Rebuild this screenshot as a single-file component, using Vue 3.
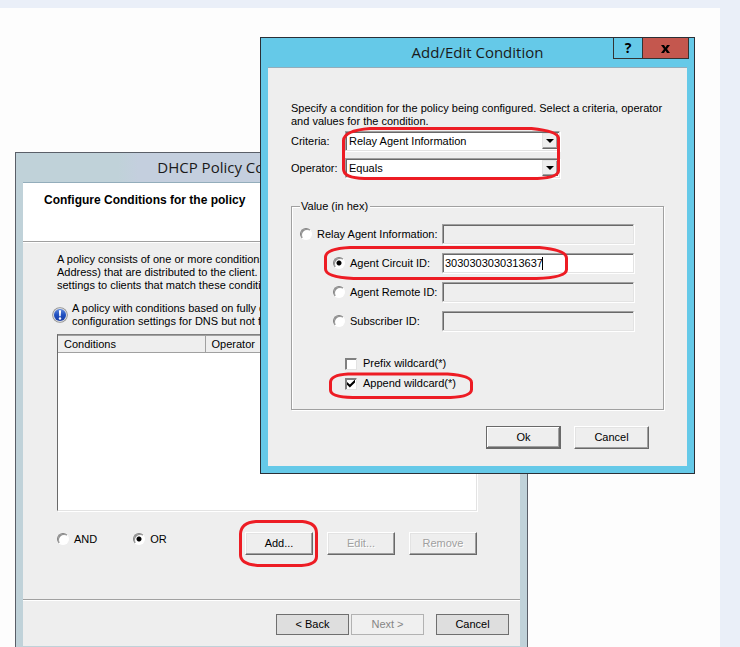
<script setup>
import { ref } from 'vue'

const match = ref('OR')
const criteria = ref('Relay Agent Information')
const operator = ref('Equals')
const field = ref('circuit')
const prefix = ref(false)
const append = ref(true)

const fields = ref([
  { id: 'relay', label: 'Relay Agent Information:', value: '', sub: false },
  { id: 'circuit', label: 'Agent Circuit ID:', value: '3030303030313637', sub: true },
  { id: 'remote', label: 'Agent Remote ID:', value: '', sub: true },
  { id: 'subscriber', label: 'Subscriber ID:', value: '', sub: true },
])
</script>

<template>
  <main class="desktop">
    <div class="sheet"></div>

    <section class="window wizard" aria-label="DHCP Policy Configuration Wizard">
      <h1 class="title">DHCP Policy Configuration Wizard</h1>
      <div class="client">
        <header class="banner"><h2>Configure Conditions for the policy</h2></header>
        <div class="page">
          <p class="intro">
            A policy consists of one or more conditions and a set<br />
            Address) that are distributed to the client. The policy<br />
            settings to clients that match these conditions.
          </p>
          <div class="note">
            <svg class="info" viewBox="0 0 16 16" aria-hidden="true">
              <defs>
                <linearGradient id="ball" x1="0" y1="0" x2="0" y2="1">
                  <stop offset="0" stop-color="#5b86dc" />
                  <stop offset="0.5" stop-color="#1f4fc0" />
                  <stop offset="1" stop-color="#1b3fa4" />
                </linearGradient>
              </defs>
              <circle cx="8" cy="8" r="7.8" fill="#8d8d8d" />
              <circle cx="8" cy="8" r="7" fill="#d9dbe0" />
              <circle cx="8" cy="8" r="6" fill="url(#ball)" />
              <path d="M6.9 3.2h2.2l-.4 6H7.3z" fill="#fff" />
              <circle cx="8" cy="11.5" r="1.2" fill="#fff" />
            </svg>
            <p>
              A policy with conditions based on fully qualified<br />
              configuration settings for DNS but not for
            </p>
          </div>
          <div class="list">
            <table>
              <thead>
                <tr><th class="first">Conditions</th><th>Operator</th></tr>
              </thead>
            </table>
          </div>
          <div class="actions">
            <div class="modes">
              <label class="choice"><input v-model="match" type="radio" name="match" value="AND" />AND</label>
              <label class="choice"><input v-model="match" type="radio" name="match" value="OR" />OR</label>
            </div>
            <div class="edit">
              <button type="button" class="raised">Add...</button>
              <button type="button" class="raised" disabled>Edit...</button>
              <button type="button" class="raised" disabled>Remove</button>
            </div>
          </div>
        </div>
        <footer class="nav">
          <button type="button" class="flat">&lt; Back</button>
          <button type="button" class="flat" disabled>Next &gt;</button>
          <button type="button" class="flat last">Cancel</button>
        </footer>
      </div>
    </section>

    <section class="window dialog" role="dialog" aria-label="Add/Edit Condition">
      <h1 class="title">Add/Edit Condition</h1>
      <div class="caption">
        <button type="button" aria-label="Help">?</button>
        <button type="button" class="close" aria-label="Close">
          <svg viewBox="0 0 9 8" aria-hidden="true">
            <path d="M0 0h3l1.500 2.400L6 0h3L6 4l3 4H6L4.500 5.600 3 8H0l3-4z" fill="#000" />
          </svg>
        </button>
      </div>
      <form class="client form" @submit.prevent>
        <p>
          Specify a condition for the policy being configured. Select a criteria, operator<br />
          and values for the condition.
        </p>
        <div class="picks">
          <label for="criteria">Criteria:</label>
          <div class="combo sunken">
            <select id="criteria" v-model="criteria">
              <option>Relay Agent Information</option>
            </select>
            <span class="arrow"></span>
          </div>
          <label for="operator">Operator:</label>
          <div class="combo sunken">
            <select id="operator" v-model="operator">
              <option>Equals</option>
            </select>
            <span class="arrow"></span>
          </div>
        </div>
        <fieldset>
          <legend>Value (in hex)</legend>
          <div v-for="f in fields" :key="f.id" class="row">
            <label class="choice" :class="{ sub: f.sub }">
              <input v-model="field" type="radio" name="field" :value="f.id" />{{ f.label }}
            </label>
            <div class="box sunken" :class="{ off: field !== f.id }">
              <input v-model="f.value" type="text" :aria-label="f.label" :disabled="field !== f.id" />
              <span v-if="field === f.id" class="caret"></span>
            </div>
          </div>
          <div class="wild">
            <label class="choice"><input v-model="prefix" type="checkbox" />Prefix wildcard(*)</label>
            <label class="choice"><input v-model="append" type="checkbox" />Append wildcard(*)</label>
          </div>
        </fieldset>
        <div class="buttons">
          <button type="submit" class="raised default">Ok</button>
          <button type="button" class="raised">Cancel</button>
        </div>
      </form>
    </section>

    <svg class="marks" width="740" height="647" viewBox="0 0 740 647" aria-hidden="true">
      <g fill="none" stroke="#ed1c24" stroke-width="3">
        <path d="M343.5 141v28q0 9 21 9.500h173q21-1 21-8V138q-1-7-27-9.500H370q-26 2-26.500 12z" />
        <path d="M325.500 257v12q0 8 28 9.500h183q30-1 30-9V258q0-8-27-10.500H350q-24 1-24.500 9.500z" />
        <path d="M330.500 382v8q0 7 22 7.500h98q21-1 21-8v-7q0-7-24-8.500H348q-17 1-17.500 8z" />
        <path d="M240.500 534v21q0 9 17 10.500h44q15-1 15-9V533q0-10-14-11.500H256q-15 1-15.500 12.500z" />
      </g>
    </svg>
  </main>
</template>

<style>
body {
  margin: 0;
  background: #eaeff8;
}
</style>

<style scoped>
* {
  box-sizing: border-box;
}
.desktop {
  position: relative;
  min-height: 100vh;
  padding: 8px 20px 0 0;
  display: flex;
  overflow: hidden;
  font: 11px/13px "Liberation Sans", Arial, sans-serif;
  color: #000;
}
.sheet {
  flex: 1;
  background: #fdfdfd;
}
p, h1, h2 {
  margin: 0;
}
p {
  white-space: nowrap;
}
.window {
  position: absolute;
  padding: 0 7px 7px;
  border: 1px solid #2b2f36;
}
.wizard {
  left: 15px;
  top: 152px;
  width: 513px;
  background: #c0d2d9;
  border-color: #5a5f68;
}
.dialog {
  left: 260px;
  top: 37px;
  width: 435px;
  background: #65c9e8;
}
.title {
  height: 29px;
  font: 15px/29px "Open Sans", "Noto Sans", sans-serif;
  text-align: center;
  color: #1a1a1a;
  white-space: nowrap;
}
.wizard .title {
  margin: 0 -7px;
  padding-left: 8px;
  background: linear-gradient(90deg, #c0d2d9 20%, #c4cfde 24%, #c4cfde);
}
.client {
  background: #eee;
  border-top: 1px solid #93adbb;
  overflow: hidden;
}

/* wizard */
.banner {
  height: 59px;
  padding: 11px 21px;
  background: #fff;
  border-bottom: 1px solid #a0a0a0;
}
.banner h2 {
  font-size: 12px;
  line-height: 13px;
}
.page {
  padding: 10px 43px 44px 34px;
  border-top: 1px solid #fff;
}
.note {
  display: flex;
  align-items: center;
  gap: 4px;
  margin: 10px 0 6px -5px;
}
.info {
  width: 16px;
  height: 16px;
  flex: none;
}
.list {
  height: 177px;
  background: #fff;
  border: 1px solid;
  border-color: #808080 #e3e3e3 #e3e3e3 #696969;
  box-shadow: inset 0 1px #808080, 1px 1px #fff;
}
table {
  width: 100%;
  border-collapse: collapse;
  table-layout: fixed;
}
th {
  height: 17px;
  padding: 2px 6px 1px;
  font-weight: normal;
  text-align: left;
  background: #eee;
  border: solid #a0a0a0;
  border-width: 1px 0;
}
th.first {
  width: 147px;
  border-right-width: 1px;
}
.actions {
  display: flex;
  justify-content: space-between;
  margin-top: 21px;
}
.modes {
  display: flex;
  gap: 36px;
  height: 14px;
}
.edit {
  display: flex;
  gap: 14px;
}
.edit .raised {
  width: 68px;
}
.nav {
  display: flex;
  justify-content: flex-end;
  gap: 2px;
  padding: 14px 11px 11px;
  border-top: 1px solid #a0a0a0;
  box-shadow: inset 0 1px #fff;
}
.last {
  margin-left: 10px;
}

/* controls */
button {
  padding: 0;
  font: inherit;
  color: #000;
}
.raised {
  width: 75px;
  height: 23px;
  background: #eee;
  border: 1px solid;
  border-color: #fff #696969 #696969 #fff;
  box-shadow: inset -1px -1px #a0a0a0, inset 1px 1px #e3e3e3;
}
.raised.default {
  border-color: #696969;
  box-shadow: inset -1px -1px #696969, inset 1px 1px #fff, inset -2px -2px #a0a0a0;
}
.raised:disabled {
  color: #a0a0a0;
  text-shadow: 1px 1px #fff;
}
.flat {
  width: 73px;
  height: 21px;
  background: #dedede;
  border: 1px solid #6f6f6f;
}
.flat:disabled {
  color: #858585;
  background: #f0f0f0;
  border-color: #b2b2b2;
}
.choice {
  display: flex;
  align-items: center;
  gap: 5px;
  white-space: nowrap;
}
input[type="radio"] {
  appearance: none;
  flex: none;
  width: 12px;
  height: 12px;
  margin: 0;
  border: 1px solid;
  border-color: #808080 #fff #fff #808080;
  border-radius: 50%;
  background: #fff;
  box-shadow: inset 1px 1px #909090;
}
input[type="radio"]:checked {
  background: radial-gradient(circle, #000 2px, #fff 3px);
}
input[type="checkbox"] {
  appearance: none;
  flex: none;
  display: grid;
  place-items: center;
  width: 12px;
  height: 12px;
  margin: 0;
  background: #fff;
  border: 1px solid;
  border-color: #808080 #e3e3e3 #e3e3e3 #808080;
  box-shadow: inset 1px 1px #808080;
}
input[type="checkbox"]:checked::before {
  content: "";
  width: 8px;
  height: 8px;
  background: #000;
  clip-path: polygon(0 30%, 36% 62%, 100% 0, 100% 38%, 36% 100%, 0 66%);
}
.sunken {
  height: 20px;
  background: #fff;
  border: 1px solid;
  border-color: #a0a0a0 #e3e3e3 #e3e3e3 #a0a0a0;
  box-shadow: inset 1px 1px #696969, 1px 1px #fff;
}

/* dialog */
.caption {
  position: absolute;
  top: 0;
  right: 5px;
  display: flex;
  border: solid #333;
  border-width: 0 1px 1px;
}
.caption button {
  width: 28px;
  height: 20px;
  font: bold 14px/20px "Open Sans", sans-serif;
  background: none;
  border: 0;
}
.caption .close {
  width: 46px;
  background: #c4574e;
  border-left: 1px solid #333;
}
.close svg {
  width: 9px;
  height: 8px;
}
.form {
  padding: 34px 23px 17px;
}
.picks {
  display: grid;
  grid-template-columns: 54px 215px;
  row-gap: 7px;
  align-items: center;
  margin: 3px 0 22px;
}
.combo {
  display: flex;
  padding: 1px;
}
select {
  appearance: none;
  flex: 1;
  min-width: 0;
  padding: 0 2px;
  font: inherit;
  color: #000;
  background: none;
  border: 0;
}
.arrow {
  display: grid;
  place-items: center;
  width: 16px;
  background: #eee;
  border: 1px solid;
  border-color: #e3e3e3 #696969 #696969 #e3e3e3;
  box-shadow: inset -1px -1px #a0a0a0;
}
.arrow::before {
  content: "";
  border: 4px solid transparent;
  border-top-color: #000;
  border-bottom: 0;
}
fieldset {
  display: block;
  min-width: 0;
  margin: 0;
  padding: 11px 29px 19px 8px;
  border: 1px solid #a0a0a0;
  box-shadow: 1px 1px #fff, inset 1px 1px #fff;
}
legend {
  padding: 0 2px 0 1px;
  background: #eee;
}
.row {
  display: flex;
  justify-content: space-between;
  align-items: center;
  margin-bottom: 9px;
}
.sub {
  margin-left: 33px;
}
.box {
  position: relative;
  width: 192px;
}
.box.off {
  background: #eee;
}
.box input {
  display: block;
  width: 100%;
  height: 18px;
  padding: 0 2px;
  font: inherit;
  color: #000;
  background: none;
  border: 0;
}
.caret {
  position: absolute;
  left: 99px;
  top: 3px;
  width: 1px;
  height: 13px;
  background: #000;
}
.wild {
  display: grid;
  gap: 7px;
  padding: 17px 0 0 45px;
}
.wild .choice {
  gap: 6px;
}
.buttons {
  display: flex;
  justify-content: flex-end;
  gap: 13px;
  margin: 16px 15px 0 0;
}
.marks {
  position: absolute;
  left: 0;
  top: 0;
  pointer-events: none;
}
</style>
